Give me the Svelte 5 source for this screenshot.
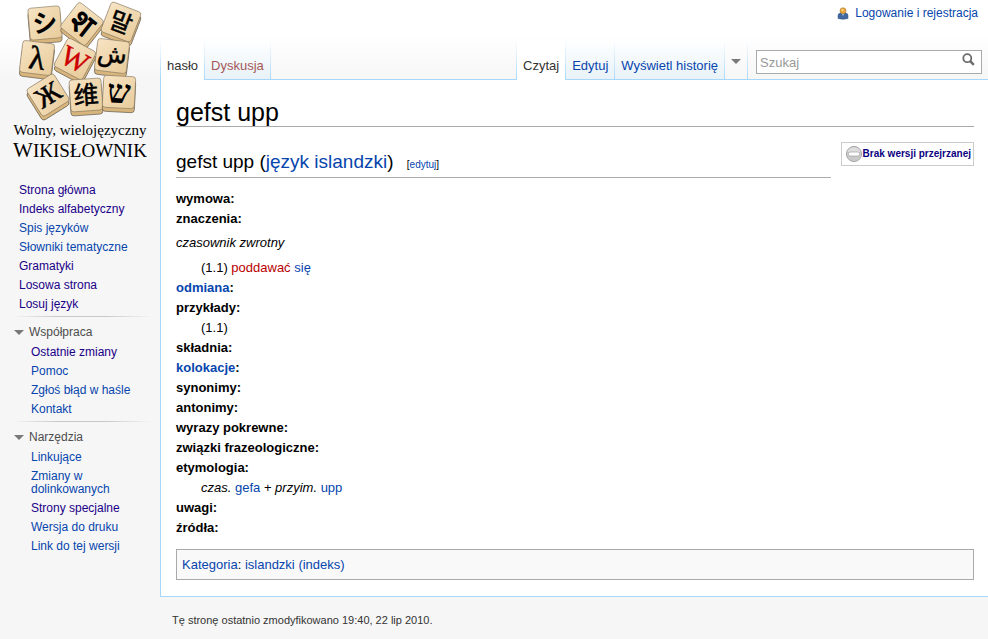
<script>
  const mainLinks = [
    ['Strona główna', true],
    ['Indeks alfabetyczny', true],
    ['Spis języków', false],
    ['Słowniki tematyczne', false],
    ['Gramatyki', true],
    ['Losowa strona', true],
    ['Losuj język', true]
  ];
  const portals = [
    {
      title: 'Współpraca',
      links: [
        ['Ostatnie zmiany', true],
        ['Pomoc', false],
        ['Zgłoś błąd w haśle', false],
        ['Kontakt', false]
      ]
    },
    {
      title: 'Narzędzia',
      links: [
        ['Linkujące', false],
        ['Zmiany w dolinkowanych', false],
        ['Strony specjalne', true],
        ['Wersja do druku', false],
        ['Link do tej wersji', false]
      ]
    }
  ];
  // Logo tiles: centre, rotation, character, font size and baseline offset
  const tiles = [
    { x: 45, y: 23, r: -5, c: 'シ', s: 25, b: 9, f: 'cjk' },
    { x: 82, y: 24, r: 38, c: 'श', s: 32, b: 10, f: 'sans' },
    { x: 121, y: 22, r: 21, c: '말', s: 24, b: 9, f: 'cjk light heavy' },
    { x: 37, y: 58, r: 7, c: 'λ', s: 33, b: 11, f: 'serif heavy' },
    { x: 75, y: 59, r: 28, c: 'W', s: 29, b: 10, f: 'serif red' },
    { x: 112, y: 56, r: 7, c: 'ش', s: 24, b: 6, f: 'sans light heavy' },
    { x: 48, y: 95, r: -32, c: 'Ж', s: 28, b: 9, f: 'serif heavy' },
    { x: 86, y: 95, r: -4, c: '维', s: 25, b: 9, f: 'cjk light heavy' },
    { x: 119, y: 92, r: 3, c: 'ש', s: 33, b: 11, f: 'serif bold' }
  ];
</script>

<div class="page">
  <aside>
    <a class="logo" href="#main" aria-label="Wikisłownik">
      <svg width="160" height="164" viewBox="0 0 160 164">
        <defs>
          <linearGradient id="wood" x1="0" y1="0" x2="1" y2="1">
            <stop offset="0" stop-color="#f7e4c4" />
            <stop offset="1" stop-color="#e8cb9a" />
          </linearGradient>
        </defs>
        {#each tiles as t}
          <g transform="translate({t.x} {t.y + 4}) rotate({t.r})">
            <rect x="-16" y="-16" width="32" height="32" rx="3" fill="#d8b57c" stroke="#655d50" stroke-width=".7" />
          </g>
          <g transform="translate({t.x} {t.y}) rotate({t.r})">
            <rect x="-16" y="-16" width="32" height="32" rx="3" fill="url(#wood)" stroke="#81725b" stroke-width=".6" />
            <text class={t.f} y={t.b} font-size={t.s} text-anchor="middle">{t.c}</text>
          </g>
        {/each}
        <text class="serif" x="80" y="135" font-size="15" text-anchor="middle">Wolny, wielojęzyczny</text>
        <text class="serif" x="80" y="157" font-size="21" text-anchor="middle">W<tspan font-size="19">IKISŁOWNIK</tspan></text>
      </svg>
    </a>
    <nav class="first">
      <ul>
        {#each mainLinks as [label, visited]}
          <li><a href="#main" class:visited>{label}</a></li>
        {/each}
      </ul>
    </nav>
    {#each portals as p}
      <nav class="portal">
        <h5>
          <svg width="10" height="5" viewBox="0 0 10 5"><path d="M0 0H10L5 5Z" fill="#797979" /></svg>
          {p.title}
        </h5>
        <ul>
          {#each p.links as [label, visited]}
            <li><a href="#main" class:visited>{label}</a></li>
          {/each}
        </ul>
      </nav>
    {/each}
  </aside>

  <div class="column">
    <header>
      <div class="personal">
        <svg width="12" height="13" viewBox="0 0 12 13">
          <path d="M1 11.5V8.5Q1 6 4 6H8Q11 6 11 8.5V11.5Q6 13 1 11.5Z" fill="#41699f" stroke="#2d4f80" stroke-width=".5" />
          <path d="M4.5 6.2L6 9L7.5 6.2Z" fill="#a9c0df" />
          <circle cx="6" cy="3.8" r="3" fill="#e9a63c" stroke="#a87325" stroke-width=".6" />
          <circle cx="5.5" cy="3" r="1.2" fill="#f8cf7d" />
        </svg>
        <a href="#main">Logowanie i rejestracja</a>
      </div>
      <div class="bar">
        <nav class="tabs">
          <a href="#main" class="selected">hasło</a>
          <a href="#main" class="new">Dyskusja</a>
        </nav>
        <nav class="tabs views">
          <a href="#main" class="selected">Czytaj</a>
          <a href="#main">Edytuj</a>
          <a href="#main">Wyświetl historię</a>
          <button class="more" aria-label="Więcej">
            <svg width="10" height="5" viewBox="0 0 10 5"><path d="M0 0H10L5 5Z" fill="#797979" /></svg>
          </button>
        </nav>
        <form class="search">
          <input type="text" placeholder="Szukaj" aria-label="Szukaj" />
          <button type="button" aria-label="Szukaj">
            <svg width="13" height="13" viewBox="0 0 13 13" fill="none" stroke="#6c6c6c">
              <circle cx="5.3" cy="5.2" r="4" stroke-width="1.8" />
              <path d="M8.2 8.2L11.8 11.8" stroke-width="2.4" />
            </svg>
          </button>
        </form>
      </div>
    </header>

    <main id="main">
      <h1>gefst upp</h1>
      <div class="section">
        <h2>gefst upp (<a href="#main">język islandzki</a>) <span class="edit">[<a href="#main">edytuj</a>]</span></h2>
        <div class="review">
          <svg width="18" height="18" viewBox="0 0 18 18">
            <circle cx="9" cy="9" r="7.6" fill="#c9c9c9" stroke="#aaa" />
            <path d="M2.5 7A7 7 0 0 1 15.5 7Z" fill="#dedede" />
            <rect x="3.5" y="7" width="11" height="4" rx="1.5" fill="#fff" stroke="#aaa" stroke-width=".8" />
          </svg>
          <a href="#main">Brak wersji przejrzanej</a>
        </div>
      </div>
      <dl>
        <dt>wymowa:</dt>
        <dt>znaczenia:</dt>
      </dl>
      <p><i>czasownik zwrotny</i></p>
      <dl>
        <dd>(1.1) <a class="new" href="#main">poddawać</a> <a href="#main">się</a></dd>
        <dt><a href="#main">odmiana</a>:</dt>
        <dt>przykłady:</dt>
        <dd>(1.1)</dd>
        <dt>składnia:</dt>
        <dt><a href="#main">kolokacje</a>:</dt>
        <dt>synonimy:</dt>
        <dt>antonimy:</dt>
        <dt>wyrazy pokrewne:</dt>
        <dt>związki frazeologiczne:</dt>
        <dt>etymologia:</dt>
        <dd><i>czas.</i> <a href="#main">gefa</a> + <i>przyim.</i> <a href="#main">upp</a></dd>
        <dt>uwagi:</dt>
        <dt>źródła:</dt>
      </dl>
      <div class="category">
        <a href="#main">Kategoria</a>: <a href="#main">islandzki</a> <a href="#main">(indeks)</a>
      </div>
    </main>
    <footer>Tę stronę ostatnio zmodyfikowano 19:40, 22 lip 2010.</footer>
  </div>
</div>

<style>
  :global(body) {
    margin: 0;
    background: #f6f6f6;
  }
  .page {
    display: grid;
    grid-template-columns: 160px minmax(0, 1fr);
    min-height: 100vh;
    background: linear-gradient(#fff 0, #fff 36px, #f6f6f6 80px);
    font: 13px/20px "Liberation Sans", Arial, sans-serif;
    color: #000;
  }
  a {
    color: #0645ad;
    text-decoration: none;
  }
  a.visited {
    color: #1a0088;
  }
  a.new {
    color: #ba0000;
  }
  svg {
    display: block;
    flex: none;
  }
  ul, dl, dd, p, h1, h2, h5 {
    margin: 0;
    padding: 0;
    list-style: none;
    font-weight: normal;
  }

  .logo svg { overflow: visible; }
  .logo text { fill: #000; }
  .cjk { font-family: "Noto Sans CJK JP", "Noto Sans CJK KR", sans-serif; font-weight: bold; }
  .sans { font-family: "DejaVu Sans", sans-serif; font-weight: bold; }
  .light { font-weight: normal; }
  .serif { font-family: "Liberation Serif", serif; }
  .bold { font-weight: bold; }
  .heavy { stroke: #000; stroke-width: .5px; }
  .logo text.red { fill: #c00; stroke: #c00; stroke-width: .4px; }

  aside {
    font-size: 12px;
    line-height: 13px;
  }
  .first {
    padding: 17px 8px 2px 19px;
  }
  li {
    padding: 3px 0;
  }
  .portal {
    padding-bottom: 2px;
    background: linear-gradient(90deg, #c8c8c800, #c8c8c8 33%, #c8c8c8 66%, #c8c8c800) 11px 0 / 141px 1px no-repeat;
  }
  .portal h5 {
    display: flex;
    align-items: center;
    gap: 5px;
    padding: 10px 14px 4px;
    font-size: 12px;
    line-height: 13px;
    color: #4d4d4d;
  }
  .portal ul {
    padding: 0 20px 0 31px;
  }

  header {
    display: flex;
    flex-direction: column;
    height: 80px;
  }
  .personal {
    display: flex;
    align-items: center;
    justify-content: flex-end;
    gap: 6px;
    padding: 6px 10px 0 0;
    font-size: 12px;
    line-height: 14px;
  }
  .bar {
    display: flex;
    flex: 1;
    margin-top: 20px;
    align-items: stretch;
    background: linear-gradient(#a7d7f9, #a7d7f9) bottom / 100% 1px no-repeat;
  }
  .tabs {
    display: flex;
  }
  .tabs::before {
    content: "";
    width: 1px;
    background: linear-gradient(#fff, #a7d7f9);
  }
  .tabs > * {
    padding: 16px 6px 3px;
    border: 0;
    border-right: 1px solid;
    border-image: linear-gradient(#fff, #a7d7f9) 1;
    background: linear-gradient(#fff, #e8f2f8) 0 0 / 100% calc(100% - 1px) no-repeat;
    white-space: nowrap;
  }
  .tabs .selected {
    background: #fff;
    color: #333;
  }
  .tabs .new {
    color: #a55858;
  }
  .tabs .more {
    padding: 3px 6px 0;
    background: none;
  }
  .views {
    margin-left: auto;
  }
  .search {
    display: flex;
    box-sizing: border-box;
    width: 226px;
    height: 24px;
    margin: 10px 6px 0 8px;
    border: 1px solid #aaa;
    background: #fff;
  }
  .search input {
    flex: 1;
    min-width: 0;
    padding: 0 3px;
    border: 0;
    background: none;
    font: 13px "Liberation Sans", Arial, sans-serif;
  }
  .search input::placeholder {
    color: #999;
  }
  .search button {
    padding: 1px 6px 7px;
    border: 0;
    background: none;
  }

  main {
    padding: 20px 14px 16px 15px;
    border: solid #a7d7f9;
    border-width: 0 0 1px 1px;
    background: #fff;
  }
  h1 {
    padding-bottom: 2px;
    border-bottom: 1px solid #aaa;
    font-size: 25px;
    line-height: 24px;
  }
  .section {
    display: flex;
    align-items: flex-start;
    gap: 10px;
    padding: 15px 0 11px;
  }
  h2 {
    flex: 1;
    padding: 8px 0 3px;
    border-bottom: 1px solid #aaa;
    font-size: 19px;
    line-height: 24px;
  }
  .edit {
    display: inline-block;
    margin-left: 8px;
    font-size: 10px;
    line-height: 12px;
  }
  .review {
    display: flex;
    align-items: center;
    padding: 2px 2px 2px 3px;
    border: 1px solid #ccc;
    font-size: 10px;
    font-weight: bold;
    line-height: 18px;
  }
  .review a {
    color: #0b0080;
  }
  dt {
    font-weight: bold;
  }
  dd {
    padding-left: 25px;
  }
  p {
    padding: 4px 0 5px;
  }
  .category {
    margin-top: 11px;
    padding: 5px 5px 4px;
    border: 1px solid #aaa;
    background: #f9f9f9;
  }
  footer {
    padding: 13px 12px 8px;
    font-size: 11px;
    color: #333;
  }
</style>
